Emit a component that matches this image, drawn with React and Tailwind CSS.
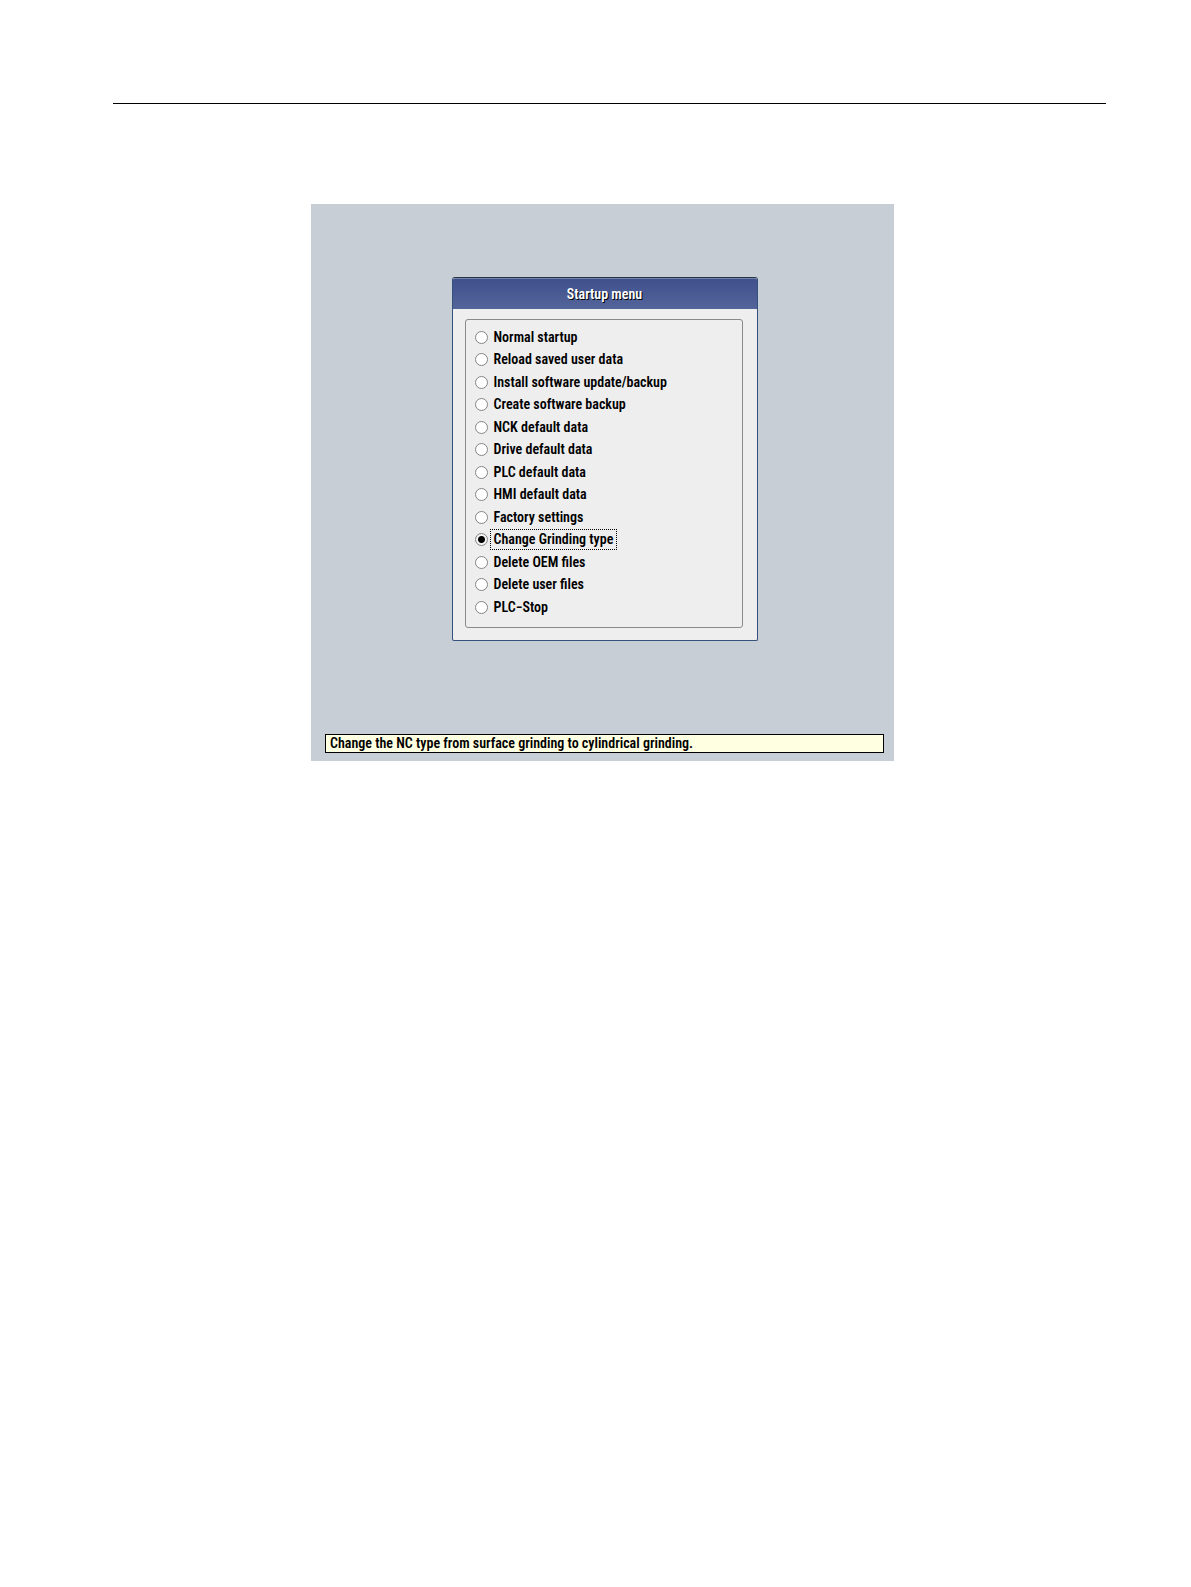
import React, { useState } from 'react';

const OPTIONS = [
  { id: 'normal', label: 'Normal startup' },
  { id: 'reload', label: 'Reload saved user data' },
  { id: 'install', label: 'Install software update/backup' },
  { id: 'backup', label: 'Create software backup' },
  { id: 'nck', label: 'NCK default data' },
  { id: 'drive', label: 'Drive default data' },
  { id: 'plc', label: 'PLC default data' },
  { id: 'hmi', label: 'HMI default data' },
  { id: 'factory', label: 'Factory settings' },
  { id: 'grinding', label: 'Change Grinding type' },
  { id: 'oem', label: 'Delete OEM files' },
  { id: 'user', label: 'Delete user files' },
  { id: 'stop', label: 'PLC−Stop' },
];

const StartupOption = ({ id, label, checked, onSelect }) => (
  <div className="flex items-center odd:h-[22px] even:h-[23px]">
    <input
      type="radio"
      id={id}
      name="startup"
      checked={checked}
      onChange={() => onSelect(id)}
      className="h-[13px] w-[13px] shrink-0 appearance-none rounded-full border border-[#858585] bg-white checked:bg-[radial-gradient(circle,#000_0_3px,#f4f4f4_4px)]"
    />
    <label
      htmlFor={id}
      className={`ml-0.5 border border-dotted px-[3px] leading-[19px] ${checked ? 'border-black' : 'border-transparent'}`}
    >
      {label}
    </label>
  </div>
);

const StartupDialog = ({ selected, onSelect }) => (
  <section className="w-full max-w-[306px] overflow-hidden rounded-t-[3px] rounded-b-xs border border-t-[#2b3446] border-x-[#34517d] border-b-[#34517d] bg-[#eeeeee]">
    <h1 className="border-t border-[#7283ad] bg-linear-to-b from-[#3f508c] to-[#54659b] text-center leading-[30px] text-white [text-shadow:1px_1px_0_#000]">
      Startup menu
    </h1>
    <fieldset
      aria-label="Startup menu"
      className="mt-[10px] mr-[14px] mb-3 ml-3 rounded-[3px] border border-[#8a8a8a] pt-1.5 pb-[9px] pl-[9px]"
    >
      {OPTIONS.map((option) => (
        <StartupOption
          key={option.id}
          id={option.id}
          label={option.label}
          checked={selected === option.id}
          onSelect={onSelect}
        />
      ))}
    </fieldset>
  </section>
);

export default function App() {
  const [selected, setSelected] = useState('grinding');

  return (
    <div className="min-h-screen bg-white pt-[103px] pr-[85px] pl-[113px] font-['Roboto_Condensed','Roboto',sans-serif] text-[14px] font-semibold text-black">
      <hr className="border-t border-black" />
      <main className="flex justify-center pt-[100px] pr-3.5">
        <div className="w-full max-w-[583px] bg-[#c8ced5] pt-[73px] pr-[10px] pb-2 pl-3.5">
          <div className="flex justify-center">
            <StartupDialog selected={selected} onSelect={setSelected} />
          </div>
          <p className="mt-[93px] border border-black bg-[#ffffe1] px-1 leading-[17px]">
            Change the NC type from surface grinding to cylindrical grinding.
          </p>
        </div>
      </main>
    </div>
  );
}
